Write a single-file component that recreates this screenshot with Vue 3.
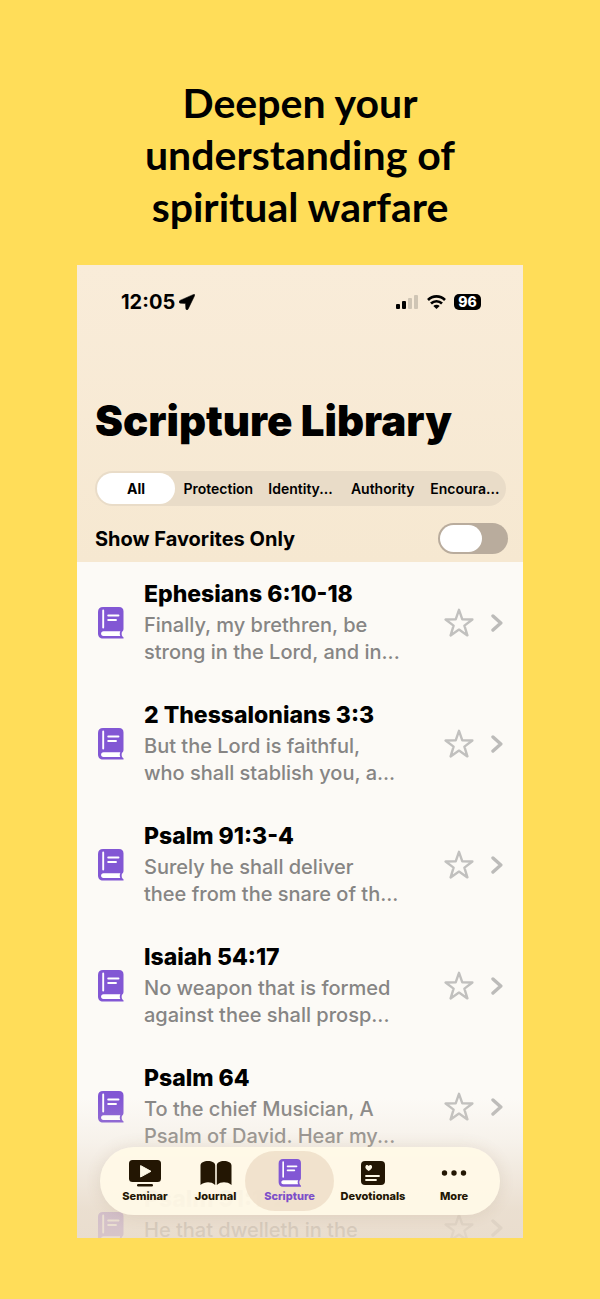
<template>
  <main class="promo">
    <h1 class="headline">Deepen your<br />understanding of<br />spiritual warfare</h1>

    <div class="phone">
      <header class="top">
        <div class="statusBar">
          <div class="clock">
            <span>12:05</span>
            <svg width="16" height="16" viewBox="0 0 16 16">
              <path d="M14.600.4 1 6.400C-.4 7.100-.2 9.100 1.300 9.200L6.500 9.500 6.800 14.500C6.900 16.200 8.500 16.400 9.200 14.900L15.700 1.500C16 .6 15.400.1 14.600.4Z" fill="#000" stroke="#000" stroke-width=".5" />
            </svg>
          </div>
          <div class="indicators">
            <svg width="23" height="14" viewBox="0 0 23 14">
              <rect x="0" y="9" width="4" height="5" rx="1" fill="#000" />
              <rect x="6" y="6" width="4" height="8" rx="1" fill="#000" />
              <rect x="12" y="3" width="4" height="11" rx="1" fill="#cfc5b5" />
              <rect x="18" y="0" width="4" height="14" rx="1" fill="#cfc5b5" />
            </svg>
            <svg width="19" height="14" viewBox="0 0 19 14">
              <g fill="none" stroke="#000" stroke-width="2.600">
                <path d="M1 5C5.700.2 13.300.2 18 5" />
                <path d="M4 8.500C7.100 5.400 11.900 5.400 15 8.500" />
              </g>
              <path d="M6.300 10.900C8.200 9.200 10.800 9.200 12.700 10.900L9.500 14Z" fill="#000" />
            </svg>
            <span class="battery">96</span>
          </div>
        </div>

        <h2 class="title">Scripture Library</h2>

        <div class="segments">
          <button
            v-for="item in categories"
            :key="item"
            :class="{ active: item == category }"
            @click="category = item"
          >{{ item }}</button>
        </div>

        <div class="favorites">
          <label for="favorites">Show Favorites Only</label>
          <input id="favorites" v-model="favoritesOnly" type="checkbox" role="switch" class="switch" />
        </div>
      </header>

      <ul class="list">
        <li v-for="verse in verses" :key="verse.title" class="row">
          <svg class="book" width="26" height="32" viewBox="0 0 26 32">
            <use href="#bookShape" />
          </svg>
          <div class="verse">
            <h3>{{ verse.title }}</h3>
            <p>{{ verse.text }}</p>
          </div>
          <button class="star" aria-label="Favorite">
            <svg width="30" height="30" viewBox="0 0 30 30">
              <path d="M15 1.800 18.300 11.300 28.400 11.500 20.400 17.600 23.400 27.400 15 21.600 6.600 27.400 9.600 17.600 1.600 11.500 11.700 11.300Z" fill="none" stroke="#c1c0be" stroke-width="2.400" stroke-linejoin="round" />
            </svg>
          </button>
          <a class="chevron" href="#" aria-label="Open">
            <svg width="12" height="18" viewBox="0 0 12 18">
              <path d="M2 2 9.800 9 2 16" fill="none" stroke="#bcbbb9" stroke-width="3.400" stroke-linecap="round" stroke-linejoin="round" />
            </svg>
          </a>
        </li>
      </ul>

      <div class="fade"></div>

      <nav class="tabs">
        <a href="#" class="tab">
          <svg width="34" height="28" viewBox="0 0 34 28">
            <rect x="1" y="1" width="32" height="22" rx="3.500" fill="#231603" />
            <path d="M12.600 6.600V18L23 12.300Z" fill="#fef8e6" stroke="#fef8e6" stroke-linejoin="round" />
            <rect x="9" y="25" width="16" height="2.400" rx="1.200" fill="#231603" />
          </svg>
          <span>Seminar</span>
        </a>
        <a href="#" class="tab">
          <svg width="32" height="28" viewBox="0 0 32 28">
            <path d="M.5 26V6.500C.5 3.500 4 2 8 2S15.200 3.500 15.200 6.500V26C13 23.800 10.500 23.200 8 23.200S2.600 24 .5 26ZM16.800 26V6.500C16.800 3.500 20 2 24 2S31.500 3.500 31.500 6.500V26C29.400 23.900 26.500 23.200 24 23.200S19 23.800 16.800 26Z" fill="#231603" />
          </svg>
          <span>Journal</span>
        </a>
        <a href="#" class="tab current">
          <svg class="book" width="24" height="28" viewBox="0 0 26 32">
            <g id="bookShape">
              <path d="M5 0H21C24 0 25.500 1.600 25.500 4.500V21.500C25.500 23.300 25 24 24 24.700 23.500 26 23.500 28 24.300 29.200L25.300 30.200C26 31 25.700 31.600 24.700 31.600H5C2 31.600 0 29.500 0 26.500V5C0 1.800 1.900 0 5 0Z" fill="currentColor" />
              <path d="M5.500 24.300H22.300C21.600 25.800 21.600 27.400 22.300 28.900H5.500C2.300 28.900 2.300 24.300 5.500 24.300Z" fill="#fff" />
              <path d="M5.200 3.500V20.500M10.200 8.500H20.500M10.200 13H18" fill="none" stroke="#fff" stroke-width="1.900" stroke-linecap="round" />
            </g>
          </svg>
          <span>Scripture</span>
        </a>
        <a href="#" class="tab">
          <svg width="26" height="28" viewBox="0 0 26 28">
            <rect x="1" y="2" width="24" height="24" rx="4" fill="#231603" />
            <path d="M8.700 12C5.800 10 5 8.800 5.500 7.200 6 5.700 8 5.600 8.700 7.100 9.400 5.600 11.500 5.700 12 7.200 12.400 8.800 11.600 10 8.700 12Z" fill="#fef8e6" />
            <path d="M6 17H19M6 21H16" stroke="#fef8e6" stroke-width="1.800" stroke-linecap="round" />
          </svg>
          <span>Devotionals</span>
        </a>
        <a href="#" class="tab">
          <svg width="26" height="28" viewBox="0 0 26 28" fill="#231603">
            <circle cx="3.500" cy="14" r="2.700" />
            <circle cx="13" cy="14" r="2.700" />
            <circle cx="22.500" cy="14" r="2.700" />
          </svg>
          <span>More</span>
        </a>
      </nav>
    </div>
  </main>
</template>

<script setup>
import { ref } from 'vue'

const categories = ['All', 'Protection', 'Identity...', 'Authority', 'Encoura...']
const category = ref('All')
const favoritesOnly = ref(false)

const verses = [
  { title: 'Ephesians 6:10-18', text: 'Finally, my brethren, be\nstrong in the Lord, and in...' },
  { title: '2 Thessalonians 3:3', text: 'But the Lord is faithful,\nwho shall stablish you, a...' },
  { title: 'Psalm 91:3-4', text: 'Surely he shall deliver\nthee from the snare of th...' },
  { title: 'Isaiah 54:17', text: 'No weapon that is formed\nagainst thee shall prosp...' },
  { title: 'Psalm 64', text: 'To the chief Musician, A\nPsalm of David. Hear my...' },
  { title: 'Psalm 91:1-2', text: 'He that dwelleth in the' }
]
</script>

<style>
body {
  margin: 0;
  background: #ffdd59;
}
</style>

<style scoped>
.promo {
  padding: 77px 77px 61px;
  font-family: Inter, "Liberation Sans", sans-serif;
  color: #000;
}

.headline {
  margin: 0 0 32px;
  font-family: Lato, "Open Sans", sans-serif;
  font-size: 41px;
  line-height: 52px;
  font-weight: 700;
  text-align: center;
  white-space: nowrap;
}

.phone {
  position: relative;
  aspect-ratio: 446 / 973;
  overflow: hidden;
  background: #fcfaf6;
}

.top {
  background: linear-gradient(#f9ecd9, #f6e8d1);
  padding: 24px 15px 8px 18px;
}

.statusBar {
  display: flex;
  justify-content: space-between;
  align-items: center;
  height: 25px;
  padding: 0 27px 0 26px;
}

.clock {
  display: flex;
  align-items: center;
  gap: 4px;
  font-size: 20px;
  font-weight: 700;
}

.indicators {
  display: flex;
  align-items: center;
  gap: 8px;
}

.battery {
  width: 27px;
  border-radius: 5px;
  background: #000;
  color: #fff;
  font-size: 14px;
  line-height: 16px;
  font-weight: 800;
  text-align: center;
}

.title {
  margin: 80px 0 23px;
  font-size: 42px;
  line-height: 54px;
  font-weight: 900;
  white-space: nowrap;
}

.segments {
  display: flex;
  margin-right: 2px;
  border-radius: 18px;
  background: #e9dcc8;
}

.segments button {
  flex: 1 1 0;
  min-width: 0;
  height: 35px;
  border: 2px solid transparent;
  border-radius: 18px;
  padding: 0;
  background: none;
  background-clip: padding-box;
  color: #000;
  font-family: inherit;
  font-size: 14px;
  font-weight: 600;
  white-space: nowrap;
}

.segments .active {
  background-color: #fff;
  font-weight: 700;
}

.favorites {
  display: flex;
  justify-content: space-between;
  align-items: center;
  margin-top: 17px;
  font-size: 20px;
  font-weight: 700;
}

.switch {
  appearance: none;
  display: flex;
  box-sizing: border-box;
  width: 70px;
  height: 31px;
  margin: 0;
  padding: 2px;
  border-radius: 16px;
  background: #b9ac9d;
}

.switch::before {
  content: "";
  width: 42px;
  border-radius: 14px;
  background: #fff;
}

.switch:checked {
  justify-content: flex-end;
  background: #8257d4;
}

.list {
  list-style: none;
  margin: 0;
  padding: 0;
}

.row {
  display: flex;
  align-items: center;
  padding: 17px 20px 17px 21px;
}

.book {
  flex: none;
  color: #8257d4;
}

.verse {
  flex: 1;
  min-width: 0;
  margin-left: 20px;
}

.verse h3 {
  margin: 0 0 3px;
  font-size: 23px;
  line-height: 30px;
  font-weight: 800;
  white-space: nowrap;
}

.verse p {
  min-height: 54px;
  margin: 0;
  color: #868584;
  font-size: 20px;
  line-height: 27px;
  font-weight: 500;
  white-space: pre;
}

.star {
  display: flex;
  border: 0;
  padding: 0;
  background: none;
}

.chevron {
  display: flex;
  margin-left: 17px;
}

.fade {
  position: absolute;
  inset: auto 0 0;
  height: 140px;
  background: linear-gradient(rgba(231, 218, 202, 0), rgba(231, 218, 202, 0.25) 30%, rgba(230, 216, 199, 0.8) 80%, rgba(230, 216, 199, 0.85));
  pointer-events: none;
}

.tabs {
  position: absolute;
  left: 23px;
  right: 23px;
  bottom: 23px;
  display: grid;
  grid-template-columns: 82fr 59fr 89fr 78fr 84fr;
  box-sizing: border-box;
  height: 68px;
  padding: 4px;
  border-radius: 34px;
  background: rgba(255, 249, 231, 0.95);
  box-shadow: 0 0 16px rgba(120, 90, 50, 0.12);
}

.tab {
  display: flex;
  flex-direction: column;
  align-items: center;
  gap: 1px;
  min-width: 0;
  padding-top: 8px;
  border-radius: 30px;
  color: #231603;
  font-size: 11px;
  line-height: 16px;
  font-weight: 800;
  text-decoration: none;
}

.current {
  background: rgba(236, 219, 196, 0.75);
  color: #7d4fc9;
}
</style>
